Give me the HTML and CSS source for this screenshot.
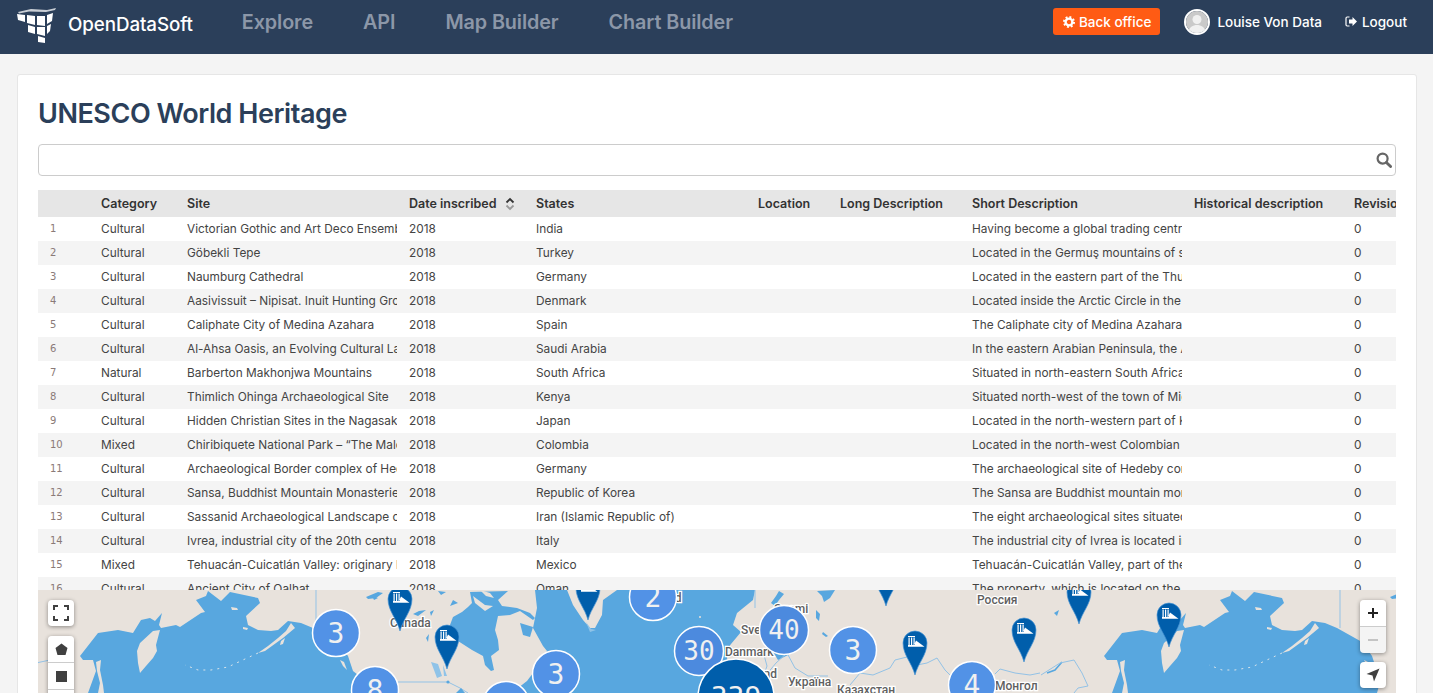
FILE: index.html
```html
<!DOCTYPE html>
<html lang="en">
<head>
  <meta charset="UTF-8">
  <title>UNESCO World Heritage</title>
  <link rel="stylesheet" href="styles.css">
</head>
<body>

<header class="topbar">
  <svg class="logo" width="40" height="36" viewBox="0 0 40 36">
    <polygon points="1,5 14,2 30,3 39,1 38,3 29,5 12,4.5 2,6.5" fill="#fff" opacity=".75"/>
    <polygon points="0,7 8,8 8,15 1,13" fill="#fff"/>
    <polygon points="10,8 18,9 18,18 10,16" fill="#fff"/>
    <polygon points="20,9 28,9 28,19 20,18" fill="#fff"/>
    <polygon points="30,8 36,6 35,14 30,17" fill="#fff"/>
    <polygon points="11,18 18,20 18,27 11,25" fill="#fff"/>
    <polygon points="20,20 28,20 28,29 20,27" fill="#fff"/>
    <polygon points="30,19 34,17 33,24 30,27" fill="#fff"/>
    <polygon points="21,29 28,31 28,36 21,35" fill="#fff"/>
  </svg>
  <span class="brand">OpenDataSoft</span>
  <nav class="mainnav">
    <a>Explore</a>
    <a>API</a>
    <a>Map Builder</a>
    <a>Chart Builder</a>
  </nav>
  <div class="usernav">
    <a class="backoffice">
      <svg width="12" height="12" viewBox="0 0 12 12"><circle cx="6" cy="6" r="3.4" fill="none" stroke="#fff" stroke-width="2.4"/><circle cx="6" cy="6" r="5" fill="none" stroke="#fff" stroke-width="2" stroke-dasharray="1.9 2"/></svg>
      Back office
    </a>
    <span class="avatar">
      <svg width="22" height="22" viewBox="0 0 22 22"><rect width="22" height="22" fill="#c9c9c9"/><circle cx="11" cy="8.5" r="4.5" fill="#f0f0f0"/><path d="M2 22c1-6 5-8 9-8s8 2 9 8z" fill="#f0f0f0"/></svg>
    </span>
    <span class="username">Louise Von Data</span>
    <a class="logout">
      <svg width="12" height="11" viewBox="0 0 12 11"><path d="M4.5 1H2.2C1.5 1 1 1.5 1 2.2v6.6C1 9.5 1.5 10 2.2 10h2.3" fill="none" stroke="#fff" stroke-width="1.2"/><path d="M4 3.6h3.5V1L12 5.5 7.5 10V7.4H4z" fill="#fff"/></svg>
      Logout
    </a>
  </div>
</header>

<main class="card">
  <h1>UNESCO World Heritage</h1>

  <div class="searchbox">
    <svg width="16" height="16" viewBox="0 0 16 16"><circle cx="6.6" cy="6.6" r="5" fill="none" stroke="#666" stroke-width="2.2"/><path d="M10.4 10.4l4.2 4.2" stroke="#666" stroke-width="2.8" stroke-linecap="round"/></svg>
  </div>

  <div class="tablewrap">
    <table class="records">
      <thead>
        <tr>
          <th class="c-num"></th><th class="c-cat">Category</th><th class="c-site">Site</th>
          <th class="c-date">Date inscribed
            <svg class="sorticon" width="10" height="14" viewBox="0 0 10 14"><path d="M1.5 5.5L5 2l3.5 3.5" fill="none" stroke="#333" stroke-width="1.8"/><path d="M1.5 8.5L5 12l3.5-3.5" fill="none" stroke="#999" stroke-width="1.8"/></svg>
          </th>
          <th class="c-states">States</th><th class="c-loc">Location</th><th class="c-long">Long Description</th>
          <th class="c-short">Short Description</th><th class="c-hist">Historical description</th><th class="c-rev">Revision</th>
        </tr>
      </thead>
      <tbody>
        <tr><td class="rownum">1</td><td>Cultural</td><td>Victorian Gothic and Art Deco Ensembles of Mumbai</td><td>2018</td><td>India</td><td></td><td></td><td>Having become a global trading centre, Mumbai</td><td></td><td>0</td></tr>
        <tr><td class="rownum">2</td><td>Cultural</td><td>Göbekli Tepe</td><td>2018</td><td>Turkey</td><td></td><td></td><td>Located in the Germuş mountains of south-eastern</td><td></td><td>0</td></tr>
        <tr><td class="rownum">3</td><td>Cultural</td><td>Naumburg Cathedral</td><td>2018</td><td>Germany</td><td></td><td></td><td>Located in the eastern part of the Thuringian</td><td></td><td>0</td></tr>
        <tr><td class="rownum">4</td><td>Cultural</td><td>Aasivissuit – Nipisat. Inuit Hunting Ground</td><td>2018</td><td>Denmark</td><td></td><td></td><td>Located inside the Arctic Circle in the central</td><td></td><td>0</td></tr>
        <tr><td class="rownum">5</td><td>Cultural</td><td>Caliphate City of Medina Azahara</td><td>2018</td><td>Spain</td><td></td><td></td><td>The Caliphate city of Medina Azahara is an</td><td></td><td>0</td></tr>
        <tr><td class="rownum">6</td><td>Cultural</td><td>Al-Ahsa Oasis, an Evolving Cultural Landscape</td><td>2018</td><td>Saudi Arabia</td><td></td><td></td><td>In the eastern Arabian Peninsula, the Al-Ahsa</td><td></td><td>0</td></tr>
        <tr><td class="rownum">7</td><td>Natural</td><td>Barberton Makhonjwa Mountains</td><td>2018</td><td>South Africa</td><td></td><td></td><td>Situated in north-eastern South Africa, the</td><td></td><td>0</td></tr>
        <tr><td class="rownum">8</td><td>Cultural</td><td>Thimlich Ohinga Archaeological Site</td><td>2018</td><td>Kenya</td><td></td><td></td><td>Situated north-west of the town of Migori</td><td></td><td>0</td></tr>
        <tr><td class="rownum">9</td><td>Cultural</td><td>Hidden Christian Sites in the Nagasaki Region</td><td>2018</td><td>Japan</td><td></td><td></td><td>Located in the north-western part of Kyushu</td><td></td><td>0</td></tr>
        <tr><td class="rownum">10</td><td>Mixed</td><td>Chiribiquete National Park – “The Maloca of the Jaguar”</td><td>2018</td><td>Colombia</td><td></td><td></td><td>Located in the north-west Colombian Amazon</td><td></td><td>0</td></tr>
        <tr><td class="rownum">11</td><td>Cultural</td><td>Archaeological Border complex of Hedeby</td><td>2018</td><td>Germany</td><td></td><td></td><td>The archaeological site of Hedeby consists of</td><td></td><td>0</td></tr>
        <tr><td class="rownum">12</td><td>Cultural</td><td>Sansa, Buddhist Mountain Monasteries in Korea</td><td>2018</td><td>Republic of Korea</td><td></td><td></td><td>The Sansa are Buddhist mountain monasteries</td><td></td><td>0</td></tr>
        <tr><td class="rownum">13</td><td>Cultural</td><td>Sassanid Archaeological Landscape of Fars</td><td>2018</td><td>Iran (Islamic Republic of)</td><td></td><td></td><td>The eight archaeological sites situated in three</td><td></td><td>0</td></tr>
        <tr><td class="rownum">14</td><td>Cultural</td><td>Ivrea, industrial city of the 20th century</td><td>2018</td><td>Italy</td><td></td><td></td><td>The industrial city of Ivrea is located in the</td><td></td><td>0</td></tr>
        <tr><td class="rownum">15</td><td>Mixed</td><td>Tehuacán-Cuicatlán Valley: originary habitat</td><td>2018</td><td>Mexico</td><td></td><td></td><td>Tehuacán-Cuicatlán Valley, part of the</td><td></td><td>0</td></tr>
        <tr><td class="rownum">16</td><td>Cultural</td><td>Ancient City of Qalhat</td><td>2018</td><td>Oman</td><td></td><td></td><td>The property, which is located on the east</td><td></td><td>0</td></tr>
      </tbody>
    </table>
  </div>

  <div class="map">
    <svg class="mapcanvas" width="1358" height="103" viewBox="0 0 1358 103">
      <defs>
        <g id="world">
          <!-- north pacific -->
          <path class="water" d="M42 66 60 43 80 40 95 43 103 30 112 28 117 31 124 23 121 35 123 38 138 35 142 37 163 23 167 22 158 10 168 6 170 1 183 11 192 2 220 8 222 13 208 26 210 35 220 40 233 41 240 40 250 31 263 33 275 38 300 52 310 66 315 81 320 85 315 103 50 103 58 81 55 70 45 70Z"/>
          <path class="land" d="M99 61 102 53 115 41 122 40 118 55 119 61 115 68 108 76 102 83 100 73Z"/>
          <path class="land" d="M253 33 248 41 240 48 230 56 220 63 227 61 245 48 257 38Z"/>
          <path class="land" d="M58 72 63 70 62 80 65 95 66 103 60 103 62 93 59 81Z"/>
          <path class="land" d="M193 17 199 18 200 20 194 20Z M205 37 210 38 209 40 205 39Z M243 51 247 48 245 54 242 55Z"/>
          <path class="land" d="M302 70 306 72 309 80 305 76Z"/>
          <path class="islands" d="M220 63 207 69 190 77 173 80 160 80 147 75"/>
          <path class="border" d="M278 0V38"/>
          <path class="water" d="M328 7 340 2 345 3 338 8 330 9Z M334 6 340 8 336 10Z"/>
          <!-- hudson bay -->
          <path class="water" d="M412 35 415 27 424 22 430 17 434 13 432 2 470 1 460 10 464 16 479 18 492 23 497 28 495 30 482 21 472 25 460 26 457 40 460 50 461 60 453 66 456 80 453 81 447 75 445 66 434 60 420 51 415 43Z"/>
          <path class="land" d="M435 6 447 15 455 16 447 21 437 13Z M442 0 452 3 456 8 448 6Z"/>
          <path class="water" d="M482 33 495 37 492 47 485 45Z"/>
          <path class="water" d="M415 10 420 13 412 16Z M375 24 381 21 388 20 380 26Z M392 22 396 20 393 26Z M388 48 391 44 390 52Z M400 1 408 2 403 5Z"/>
          <path class="lake" d="M393 72 400 74 404 86 399 88Z M405 75 409 86 406 86Z"/>
          <path class="border" d="M358 92H410L422 98 430 103"/>
          <circle class="water" cx="410" cy="92" r="1.6"/>
          <path class="water" d="M418 103 423 98 427 103Z"/>
          <!-- atlantic, with greenland on top -->
          <path class="water" d="M497 0 499 18 495 38 505 56 509 61 495 83 489 91 480 98 478 103 700 103 690 75 688 60 703 42 695 35 699 23 715 10 717 0Z"/>
          <path class="land" d="M529 0 535 15 545 30 552 38 557 38 564 25 565 10 579 0Z"/>
          <path class="lake" d="M548 32 553 39 558 40 552 42Z"/>
          <circle class="land" cx="662" cy="27" r="1"/>
          <!-- north sea edges, baltic, white sea, inland lakes -->
          <path class="water" d="M733 13 738 6 741 1 746 4 741 10 737 16Z"/>
          <path class="water" d="M779 1 797 0 792 8 786 12 784 6Z"/>
          <path class="water" d="M778 20 782 24 781 31 778 28Z M785 42 790 46 788 47 784 44Z"/>
          <path class="water" d="M734 46 745 60 750 65 740 70 735 62Z"/>
          <!-- rivers and borders -->
          <path class="border" d="M717 0V18M726 65 729 76 724 90 738 73 749 63 757 78 770 86 790 86M812 95 822 83 835 85 852 78 857 70 869 67 879 75 889 73 899 68 907 80 912 85 925 90"/>
          <path class="border" d="M957 84 962 79 977 83 992 85 1002 83"/>
          <path class="riverthick" d="M1009 83 1017 80 1024 72"/>
          <path class="border" d="M1003 85 1022 73 1036 70 1044 83 1050 96 1040 98 1036 103"/>
          <path class="water" d="M1016 23 1021 20 1019 26Z"/>
        </g>
        <g id="pin">
          <path class="pinshape" d="M0 0C-3-12-12-20-12-32A12 12 0 1 1 12-32C12-20 3-12 0 0Z"/>
          <path class="pinmark" d="M-7-39H0V-38H-7ZM-6.500-37.500H-5.300V-30H-6.500ZM-4-37.500H-2.800V-30H-4ZM-1.500-37.500H-.3V-30H-1.500ZM-7-28.300H9.500L1-34.500-1-30H-7Z"/>
        </g>
      </defs>

      <rect class="land" width="1358" height="103"/>
      <use href="#world" x="-1024"/>
      <use href="#world"/>
      <use href="#world" x="1024"/>

      <text class="maplabel" x="352" y="37">Canada</text>
      <text class="maplabel" x="611" y="12">Island</text>
      <text class="maplabel" x="703" y="44">Sverige</text>
      <text class="maplabel" x="736" y="23">Suomi</text>
      <text class="maplabel" x="687" y="66">Danmark</text>
      <text class="maplabel" x="672" y="88">Deutschland</text>
      <text class="maplabel" x="750" y="96">Україна</text>
      <text class="maplabel" x="939" y="14">Россия</text>
      <text class="maplabel" x="799" y="104">Казахстан</text>
      <text class="maplabel" x="957" y="100">Монгол</text>

      <use href="#pin" x="362" y="41"/>
      <use href="#pin" x="409" y="79"/>
      <use href="#pin" x="550" y="30"/>
      <use href="#pin" x="848" y="16"/>
      <use href="#pin" x="877" y="85"/>
      <use href="#pin" x="986" y="72"/>
      <use href="#pin" x="1041" y="34"/>
      <use href="#pin" x="1131" y="57"/>

      <circle class="bubble" cx="298" cy="43" r="23.500"/><text class="bubbletext" x="298" y="53">3</text>
      <circle class="bubble" cx="337" cy="100" r="23.500"/><text class="bubbletext" x="337" y="110">8</text>
      <circle class="bubble" cx="518" cy="84" r="23.500"/><text class="bubbletext" x="518" y="94">3</text>
      <circle class="bubble" cx="468" cy="115" r="23.500"/>
      <circle class="bubble" cx="615" cy="7" r="23.500"/><text class="bubbletext" x="615" y="17">2</text>
      <circle class="bubble dense" cx="661" cy="61" r="24.500"/><text class="bubbletext small" x="661" y="70">30</text>
      <circle class="bubble dense" cx="746" cy="40" r="24.500"/><text class="bubbletext small" x="746" y="49">40</text>
      <circle class="bubble" cx="815" cy="60" r="23.500"/><text class="bubbletext" x="815" y="70">3</text>
      <circle class="bubble" cx="934" cy="95" r="23.500"/><text class="bubbletext" x="934" y="105">4</text>
      <circle class="bubble big" cx="698" cy="107" r="38"/><text class="bubbletext" x="698" y="117">339</text>
    </svg>

    <a class="mapbtn btn-full">
      <svg width="16" height="16" viewBox="0 0 16 16"><path d="M1 5V1H5M11 1H15V5M15 11V15H11M5 15H1V11" fill="none" stroke="#404040" stroke-width="2"/></svg>
    </a>
    <div class="mapgroup btn-draw">
      <a class="mapbtn"><svg width="13" height="13" viewBox="0 0 13 13"><path d="M6.500.5 12.500 5 10.500 12H2.500L.5 5Z" fill="#404040"/></svg></a>
      <a class="mapbtn"><svg width="11" height="11" viewBox="0 0 11 11"><rect width="11" height="11" fill="#404040"/></svg></a>
      <a class="mapbtn"></a>
    </div>
    <div class="mapgroup btn-zoom">
      <a class="mapbtn"><svg width="12" height="12" viewBox="0 0 12 12"><path d="M6 1v10M1 6h10" stroke="#222" stroke-width="2"/></svg></a>
      <a class="mapbtn disabled"><svg width="12" height="12" viewBox="0 0 12 12"><path d="M1 6h10" stroke="#c4c4c4" stroke-width="2"/></svg></a>
    </div>
    <a class="mapbtn btn-locate">
      <svg width="14" height="14" viewBox="0 0 14 14"><path d="M13.500.5 8 13.500 6.500 7.500.5 6Z" fill="#404040"/></svg>
    </a>
  </div>
</main>

</body>
</html>
```

FILE: styles.css
```css
html, body { height: 100%; overflow: hidden; }
body { margin: 0; background: #f4f4f4; font-family: Inter, "Liberation Sans", sans-serif; color: #333; }

.topbar { display: flex; align-items: center; height: 54px; background: #2b3f5a; padding: 0 26px 0 17px; box-sizing: border-box; }
.logo { margin-right: 11px; margin-top: -5px; flex: none; }
.brand { color: #fff; font-size: 18.800px; font-weight: 500; margin-right: 49px; margin-top: -6px; letter-spacing: -.1px; }
.mainnav { display: flex; gap: 50px; margin-top: -10px; }
.mainnav a { color: #8c97a8; font-size: 19.800px; font-weight: 600; letter-spacing: -.1px; }
.usernav { display: flex; align-items: center; margin-left: auto; margin-top: -11px; color: #fff; font-size: 13.500px; font-weight: 500; }
.backoffice { display: flex; align-items: center; gap: 4px; background: #ff5b14; border-radius: 3px; height: 27px; padding: 0 9px 0 10px; color: #fff; }
.avatar { width: 22px; height: 22px; border: 2px solid #fff; border-radius: 50%; overflow: hidden; margin-left: 24px; }
.avatar svg { display: block; }
.username { margin-left: 7px; }
.logout { display: flex; align-items: center; gap: 5px; margin-left: 23px; }

.card { margin: 20px 16px 0 17px; background: #fff; border: 1px solid #e6e6e6; border-radius: 3px; padding: 0 20px 20px; height: 700px; box-sizing: border-box; }
h1 { margin: 22px 0 13px; font-size: 27px; line-height: 34px; font-weight: 600; color: #2b3f5a; letter-spacing: -.45px; }

.searchbox { display: flex; align-items: center; justify-content: flex-end; height: 32px; box-sizing: border-box; border: 1px solid #ccc; border-radius: 4px; padding-right: 3px; }

.tablewrap { margin-top: 14px; height: 400px; overflow: hidden; }
.records { table-layout: fixed; border-collapse: collapse; width: 1400px; font-size: 11.850px; }
.records th { box-sizing: border-box; height: 27px; padding: 0 0 0 12px; background: #e6e6e6; font-size: 12.500px; font-weight: 600; text-align: left; overflow: hidden; white-space: nowrap; color: #333; }
.records td { box-sizing: border-box; height: 24px; padding: 0 0 1px 12px; overflow: hidden; white-space: nowrap; color: #444; }
.records tbody tr:nth-child(even) td { background: #f4f4f4; }
.records td.rownum { font-family: "DejaVu Sans", sans-serif; font-size: 10px; color: #8a7a78; }
.sorticon { vertical-align: -3px; margin-left: 5px; }
.c-num { width: 51px; }
.c-cat { width: 86px; }
.c-site { width: 222px; }
.c-date { width: 127px; }
.c-states { width: 222px; }
.c-loc { width: 82px; }
.c-long { width: 132px; }
.c-short { width: 222px; }
.c-hist { width: 160px; }
.c-rev { width: 96px; }

.map { position: relative; height: 103px; overflow: hidden; }
.mapcanvas { display: block; }
.land { fill: #e8e2dc; }
.water { fill: #58a7df; }
.lake { fill: #8fc3e8; }
.border { fill: none; stroke: #93c2e6; stroke-width: 1; }
.riverthick { fill: none; stroke: #58a7df; stroke-width: 1.6; }
.islands { fill: none; stroke: #d9e4ea; stroke-width: 1; stroke-dasharray: 2 5; }
.maplabel { font-family: Roboto, sans-serif; font-size: 12px; font-weight: 500; fill: #5f5f5f; stroke: #fff; stroke-width: 2.5px; paint-order: stroke; }
.pinshape { fill: #005eab; stroke: #4a95d4; stroke-width: .7; }
.pinmark { fill: #fff; }
.bubble { fill: #5292e6; stroke: #fff; stroke-width: 1.5; }
.bubble.dense { fill: #4c8ade; }
.bubble.big { fill: #005eab; }
.bubbletext { font-family: "DejaVu Sans Mono", monospace; font-size: 28px; fill: #f0f0f0; text-anchor: middle; }
.bubbletext.small { font-size: 26px; }

.mapbtn { display: flex; align-items: center; justify-content: center; width: 26px; height: 26px; background: #fff; }
.mapgroup { position: absolute; border-radius: 4px; overflow: hidden; box-shadow: 0 1px 4px rgba(0,0,0,.4); }
.mapgroup .mapbtn + .mapbtn { border-top: 1px solid #ccc; }
.mapbtn.disabled { background: #f4f4f4; }
.btn-full, .btn-locate { position: absolute; border-radius: 4px; box-shadow: 0 1px 4px rgba(0,0,0,.4); }
.btn-full { left: 10px; top: 10px; }
.btn-draw { left: 10px; top: 46px; }
.btn-zoom { right: 10px; top: 10px; }
.btn-locate { right: 10px; top: 72px; }
```
